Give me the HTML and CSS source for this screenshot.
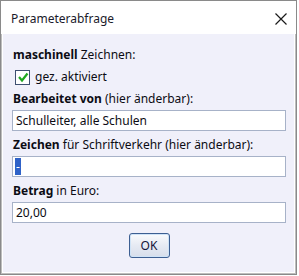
FILE: index.html
```html
<!DOCTYPE html>
<html>
<head>
<meta charset="utf-8">
<link rel="stylesheet" href="styles.css">
</head>
<body>
<div class="window">
  <div class="titlebar">
    <span class="title">Parameterabfrage</span>
    <svg class="close" width="12" height="12" viewBox="0 0 12 12"><path d="M0.5 0.5 L11.5 11.5 M11.5 0.5 L0.5 11.5" stroke="#1a1a1a" stroke-width="1.2" fill="none"/></svg>
  </div>
  <div class="content">
    <div class="label"><b>maschinell</b> Zeichnen:</div>
    <label class="check-row">
      <span class="checkbox"><svg width="12" height="12" viewBox="0 0 12 12"><path d="M2 6 L5 9.5 L10.5 2.5" stroke="#1fa81f" stroke-width="2.2" fill="none"/></svg></span>
      <span>gez. aktiviert</span>
    </label>
    <div class="field">
      <div class="label"><b>Bearbeitet von</b> (hier änderbar):</div>
      <div class="input">Schulleiter, alle Schulen</div>
    </div>
    <div class="field">
      <div class="label"><b>Zeichen</b> für Schriftverkehr (hier änderbar):</div>
      <div class="input"><span class="sel">-</span></div>
    </div>
    <div class="field">
      <div class="label"><b>Betrag</b> in Euro:</div>
      <div class="input">20,00</div>
    </div>
    <div class="buttons">
      <button class="ok">OK</button>
    </div>
  </div>
</div>
</body>
</html>
```
FILE: styles.css
```css
html, body {
  margin: 0;
  padding: 0;
  background: #ffffff;
}
body {
  font-family: "Noto Sans", "Open Sans", sans-serif;
  font-size: 12px;
  color: #0c0c14;
}
.window {
  width: 297px;
  height: 275px;
  box-sizing: border-box;
  border: 1px solid #8a8a8a;
  background: #bdbdbd;
  padding: 0 1px 1px 1px;
  display: flex;
  flex-direction: column;
}
.titlebar {
  height: 33px;
  flex: none;
  background: #fff;
  display: flex;
  align-items: center;
  justify-content: space-between;
  padding: 0 9px 0 10px;
  margin: 0 -1px;
}
.title {
  color: #1a1a2a;
  line-height: 16px;
  padding-top: 2px;
}
.close {
  display: block;
  margin-top: 2px;
}
.content {
  flex: 1;
  background: #f0f0fa;
  border: 1px solid #fff;
  border-top: none;
  padding: 13px 8px 0 9px;
  display: flex;
  flex-direction: column;
}
.label {
  line-height: 16px;
  padding-left: 1px;
  white-space: nowrap;
}
.label b {
  font-weight: 700;
}
.check-row {
  display: flex;
  align-items: center;
  gap: 5px;
  margin: 6px 0 0 3px;
  line-height: 16px;
}
.checkbox {
  width: 15px;
  height: 15px;
  box-sizing: border-box;
  border: 1px solid #3e4f70;
  background: #fff;
  display: flex;
  align-items: center;
  justify-content: center;
}
.checkbox svg {
  display: block;
}
.field {
  display: flex;
  flex-direction: column;
  gap: 3px;
  margin-top: 6px;
}
.input {
  height: 21px;
  box-sizing: border-box;
  border: 1px solid #a7b2c8;
  background: #fff;
  padding: 0 3px;
  line-height: 19px;
  white-space: nowrap;
}
.sel {
  display: inline-block;
  background: #2f62c8;
  color: #fff;
  line-height: 17px;
  padding: 0 1px;
  vertical-align: top;
  margin: 1px 0 0 -1px;
}
.buttons {
  display: flex;
  justify-content: center;
  margin-top: 10px;
}
.ok {
  width: 41px;
  height: 25px;
  font-family: inherit;
  font-size: 12px;
  color: #14143a;
  border: 1px solid #3d5f92;
  border-radius: 3px;
  background: linear-gradient(#fafbfd, #e6eaf3 50%, #d7deeb);
  box-shadow: inset 0 0 0 1px #cfe3f7;
  padding: 0;
}
```
